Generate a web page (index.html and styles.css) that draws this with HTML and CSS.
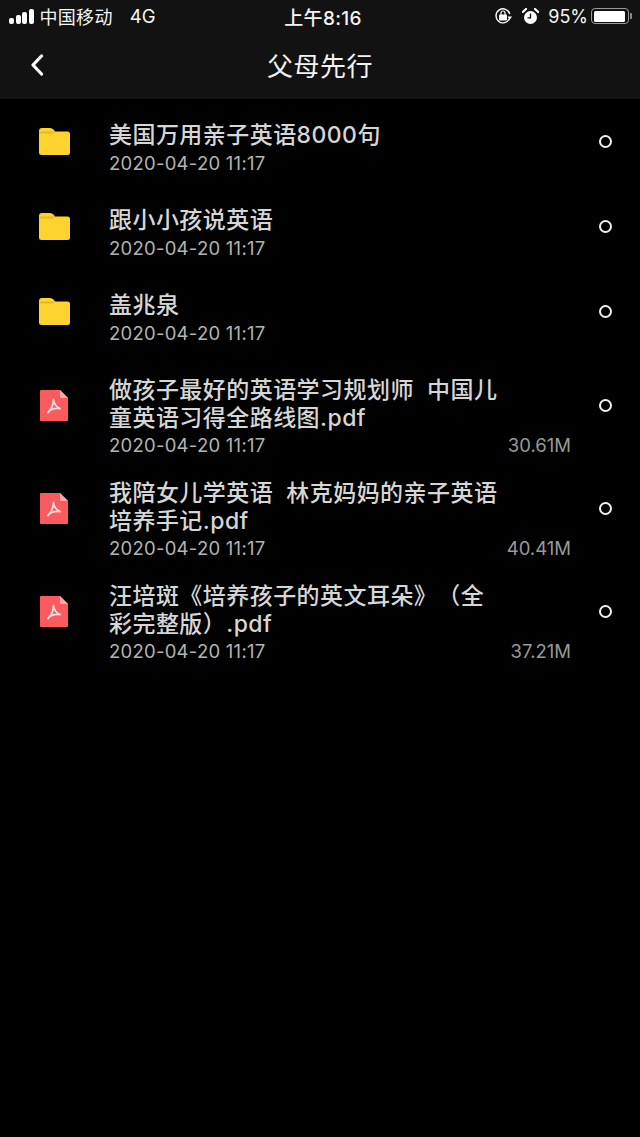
FILE: index.html
```html
<!DOCTYPE html>
<html lang="zh-CN">
<head>
<meta charset="UTF-8">
<meta name="viewport" content="width=device-width, initial-scale=1.0">
<title>父母先行</title>
<link rel="stylesheet" href="styles.css">
</head>
<body>

<svg class="defs" width="0" height="0">
  <symbol id="folder" viewBox="0 0 31 27">
    <path d="M0 3 Q0 0 3 0 H11 Q13 0 14.500 1.500 L16 3.500 H28.500 Q31 3.500 31 6 V24.500 Q31 27 28.500 27 H2.500 Q0 27 0 24.500 Z" fill="#ffd32e"/>
    <path d="M0 6 Q0 3.500 2.500 3.500 H16 L14 5.500 H1 Z" fill="#e8b820"/>
  </symbol>
  <symbol id="pdf" viewBox="0 0 28 31">
    <path d="M1 0 H20 L28 8 V30 Q28 31 27 31 H1 Q0 31 0 30 V1 Q0 0 1 0 Z" fill="#fb5b5f"/>
    <path d="M20 0 L28 8 H21 Q20 8 20 7 Z" fill="#fda9aa"/>
    <path d="M13.500 9.500 C13.500 14 11.500 19 8 22.500 M13.500 9.500 C14 14 16.500 17 20 18.500 M8 22.500 C10 19.500 15 18 20 18.500" fill="none" stroke="#fbe3e3" stroke-width="1.800" stroke-linecap="round"/>
  </symbol>
</svg>

<div class="top">
  <!-- status bar -->
  <div class="status">
    <div class="status-left">
      <div class="signal"><i class="b1"></i><i class="b2"></i><i class="b3"></i><i class="b4"></i></div>
      <span class="carrier">中国移动</span>
      <span class="net">4G</span>
    </div>
    <div class="clock">上午8:16</div>
    <div class="status-right">
      <svg class="lock-icon" width="18" height="18" viewBox="0 0 18 18">
        <path d="M15.500 11.500 A7 7 0 1 1 15.800 7" fill="none" stroke="#fff" stroke-width="1.400"/>
        <path d="M13.500 8.500 H18 L15.800 11.800 Z" fill="#fff" transform="translate(0 1)"/>
        <rect x="5" y="7.500" width="8" height="6" rx="1" fill="#fff"/>
        <path d="M7 8 V6 A2 2 0 0 1 11 6 V8" fill="none" stroke="#fff" stroke-width="1.200"/>
      </svg>
      <svg class="alarm-icon" width="17" height="17" viewBox="0 0 17 17">
        <circle cx="8.500" cy="9.500" r="6.500" fill="#fff"/>
        <path d="M8.500 5.500 V9.800 H5.500" fill="none" stroke="#111" stroke-width="1.300"/>
        <path d="M0.800 4 L4 1 M16.200 4 L13 1" stroke="#fff" stroke-width="2.200" stroke-linecap="round"/>
      </svg>
      <span class="pct">95%</span>
      <div class="battery"><div class="battery-fill"></div></div>
      <div class="battery-tip"></div>
    </div>
  </div>
  <!-- nav bar -->
  <div class="nav">
    <svg class="back" width="14" height="22" viewBox="0 0 14 22">
      <path d="M11.500 2 L3 11 L11.500 20" fill="none" stroke="#fff" stroke-width="3.200" stroke-linecap="round" stroke-linejoin="round"/>
    </svg>
    <div class="nav-title">父母先行</div>
  </div>
</div>

<div class="list">
  <div class="row">
    <svg class="icon" width="31" height="27"><use href="#folder"/></svg>
    <div class="info">
      <div class="name">美国万用亲子英语8000句</div>
      <div class="meta"><span class="date">2020-04-20 11:17</span></div>
    </div>
    <div class="radio"></div>
  </div>
  <div class="row">
    <svg class="icon" width="31" height="27"><use href="#folder"/></svg>
    <div class="info">
      <div class="name">跟小小孩说英语</div>
      <div class="meta"><span class="date">2020-04-20 11:17</span></div>
    </div>
    <div class="radio"></div>
  </div>
  <div class="row">
    <svg class="icon" width="31" height="27"><use href="#folder"/></svg>
    <div class="info">
      <div class="name">盖兆泉</div>
      <div class="meta"><span class="date">2020-04-20 11:17</span></div>
    </div>
    <div class="radio"></div>
  </div>
  <div class="row file">
    <svg class="icon" width="28" height="31"><use href="#pdf"/></svg>
    <div class="info">
      <div class="name">做孩子最好的英语学习规划师&nbsp;&nbsp;中国儿<br>童英语习得全路线图.pdf</div>
      <div class="meta"><span class="date">2020-04-20 11:17</span><span class="size">30.61M</span></div>
    </div>
    <div class="radio"></div>
  </div>
  <div class="row file">
    <svg class="icon" width="28" height="31"><use href="#pdf"/></svg>
    <div class="info">
      <div class="name">我陪女儿学英语&nbsp;&nbsp;林克妈妈的亲子英语<br>培养手记.pdf</div>
      <div class="meta"><span class="date">2020-04-20 11:17</span><span class="size">40.41M</span></div>
    </div>
    <div class="radio"></div>
  </div>
  <div class="row file">
    <svg class="icon" width="28" height="31"><use href="#pdf"/></svg>
    <div class="info">
      <div class="name">汪培斑《培养孩子的英文耳朵》（全<br>彩完整版）.pdf</div>
      <div class="meta"><span class="date">2020-04-20 11:17</span><span class="size">37.21M</span></div>
    </div>
    <div class="radio"></div>
  </div>
</div>

</body>
</html>
```

FILE: styles.css
```css
html, body {
  margin: 0;
  background-color: #000;
  height: 100%;
  overflow: hidden;
}

body {
  font-family: "Inter", "Noto Sans CJK SC", sans-serif;
  color: #d9d9d9;
}

.defs {
  display: block;
  height: 0;
}

.top {
  background-color: #121212;
  height: 99px;
}

/* status bar */
.status {
  height: 32px;
  display: flex;
  align-items: center;
  justify-content: space-between;
  padding: 0 8px 0 9px;
  color: #f4f4f4;
  font-size: 18px;
  position: relative;
}

.status-left {
  display: flex;
  align-items: center;
}

.signal {
  display: flex;
  align-items: flex-end;
  gap: 1.500px;
  margin-right: 6px;
}

.signal i {
  display: block;
  width: 5px;
  background-color: #fff;
  border-radius: 2px;
}

.b1 { height: 6px; }
.b2 { height: 9px; }
.b3 { height: 12px; }
.b4 { height: 15px; }

.carrier {
  letter-spacing: 0.300px;
}

.net {
  margin-left: 17px;
  font-size: 18.500px;
}

.clock {
  position: absolute;
  left: 6px;
  right: 0;
  text-align: center;
  font-size: 19px;
  font-weight: 500;
  letter-spacing: 0.300px;
}

.status-right {
  display: flex;
  align-items: center;
}

.lock-icon { margin-right: 10px; }
.alarm-icon { margin-right: 9px; }
.pct { margin-right: 3px; }

.battery {
  border: 1.500px solid #999;
  border-radius: 4px;
  padding: 1.500px;
  box-sizing: content-box;
  width: 33px;
  height: 11px;
}

.battery-fill {
  width: 95%;
  height: 100%;
  background-color: #fff;
  border-radius: 1.500px;
}

.battery-tip {
  width: 2px;
  height: 6px;
  background-color: #888;
  margin-left: 1px;
  border-radius: 0 1px 1px 0;
}

/* nav bar */
.nav {
  height: 67px;
  display: flex;
  align-items: center;
  justify-content: center;
  position: relative;
}

.back {
  position: absolute;
  left: 30px;
  top: 22px;
}

.nav-title {
  font-size: 26px;
  color: #f2f2f2;
  letter-spacing: 0.500px;
  padding-bottom: 3px;
}

/* file list */
.row {
  height: 85px;
  display: flex;
  align-items: center;
}

.row.file {
  height: 103px;
}

.icon {
  flex: none;
  margin-left: 39px;
  margin-right: 39px;
}

.file .icon {
  margin-left: 40px;
  margin-right: 41px;
}

.info {
  width: 462px;
  flex: none;
  align-self: flex-start;
  padding-top: 23px;
}

.name {
  font-size: 23px;
  font-weight: 500;
  line-height: 27.500px;
  letter-spacing: 0.450px;
  white-space: nowrap;
  color: #d6d6d6;
  text-spacing-trim: space-all;
}

.meta {
  display: flex;
  justify-content: space-between;
  font-size: 18.500px;
  line-height: 27px;
  color: #b3b3b3;
}

.date {
  letter-spacing: 0.250px;
}

.size {
  color: #999;
}

.radio {
  width: 9px;
  height: 9px;
  border: 2px solid #f0f0f0;
  border-radius: 50%;
  margin-left: 28px;
}
```
